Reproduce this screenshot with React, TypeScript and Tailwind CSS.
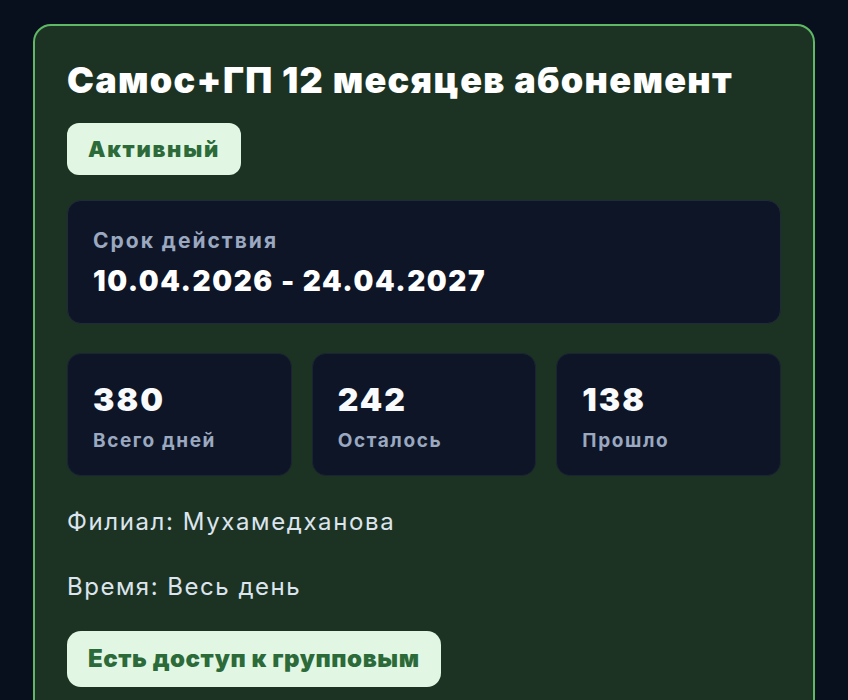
import React from "react";

const font = { fontFamily: "Inter, 'Noto Sans', sans-serif" };

function Stat({ value, label }: { value: string; label: string }) {
  return (
    <div className="flex-1 h-[123px] rounded-[14px] bg-[#0e1526] border border-[#1a2433] pl-[25px] pt-[26px]">
      <div className="text-[32px] leading-[40px] font-black text-[#f8fafc] tracking-[2px]">{value}</div>
      <div className="mt-[8px] text-[19px] leading-[26px] font-bold text-[#9aa8c0] tracking-[1.6px]">{label}</div>
    </div>
  );
}

export default function App() {
  return (
    <div className="min-h-[700px] h-[700px] overflow-hidden bg-[#08101e] pt-[24px] px-[33px]" style={font}>
      <div className="rounded-[18px] border-[2.5px] border-[#5fb865] bg-[#1c3323] pt-[32px] px-[32px] pb-[40px]">
        <h1 className="text-[36px] leading-[44px] font-black text-white tracking-[1.3px] whitespace-nowrap">
          Самос+ГП 12 месяцев абонемент
        </h1>
        <div className="mt-[21px] inline-flex h-[52px] items-center rounded-[12px] bg-[#e1f7e4] px-[21px] text-[22px] font-black text-[#2d6a3a] tracking-[1.75px]">
          Активный
        </div>
        <div className="mt-[25px] h-[124px] rounded-[14px] bg-[#0e1526] border border-[#1f2a3b] pl-[25px] pt-[26px]">
          <div className="text-[21px] leading-[28px] font-bold text-[#9aa8c0] tracking-[2px]">Срок действия</div>
          <div className="mt-[7px] text-[28px] leading-[38px] font-black text-white tracking-[1.55px]">
            10.04.2026 - 24.04.2027
          </div>
        </div>
        <div className="mt-[29px] flex gap-[20px]">
          <Stat value="380" label="Всего дней" />
          <Stat value="242" label="Осталось" />
          <Stat value="138" label="Прошло" />
        </div>
        <div className="mt-[30px] text-[24px] leading-[32px] text-[#dce5ee] tracking-[1.6px]">Филиал: Мухамедханова</div>
        <div className="mt-[33px] text-[24px] leading-[32px] text-[#dce5ee] tracking-[1.5px]">Время: Весь день</div>
        <div className="mt-[28px] inline-flex h-[56px] items-center rounded-[14px] bg-[#e1f7e4] px-[21px] text-[24px] font-black text-[#2d6a3a] tracking-[0.55px]">
          Есть доступ к групповым
        </div>
      </div>
    </div>
  );
}
